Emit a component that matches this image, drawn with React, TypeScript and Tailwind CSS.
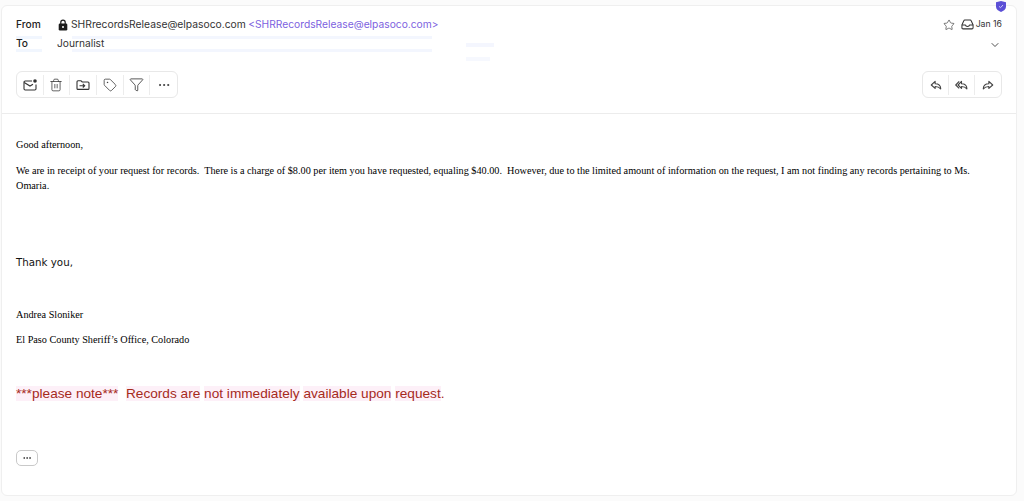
import React from 'react';
import { Trash2, Tag, Filter, MoreHorizontal, Star, ChevronDown } from 'lucide-react';

const MailUnread = () => (
  <svg width="14" height="14" viewBox="0 0 14 14" fill="none" stroke="currentColor" strokeWidth="1.1">
    <path d="M9 3H2.200C1.500 3 1 3.500 1 4.200v6.600c0 .7.5 1.200 1.200 1.200h9.600c.7 0 1.200-.5 1.200-1.200V6.500" />
    <path d="M1.200 4.500 7 8l3-1.800" />
    <circle cx="12" cy="3" r="1.800" fill="currentColor" stroke="none" />
  </svg>
);

const MoveTo = () => (
  <svg width="14" height="14" viewBox="0 0 14 14" fill="none" stroke="currentColor" strokeWidth="1.1">
    <path d="M1 3.800c0-.6.5-1 1-1h3l1.200 1.200H12c.6 0 1 .4 1 1v5.400c0 .6-.4 1-1 1H2c-.5 0-1-.4-1-1z" />
    <path d="M3.500 7.700h5M6.800 5.900l1.900 1.800-1.900 1.800" />
  </svg>
);

const Inbox = () => (
  <svg width="13" height="13" viewBox="0 0 14 14" fill="none" stroke="currentColor" strokeWidth="1.1">
    <path d="M1 7.500 3 3c.2-.5.6-.8 1.100-.8h5.800c.5 0 .9.3 1.100.8l2 4.500v3c0 .7-.5 1.200-1.200 1.200H2.200c-.7 0-1.200-.5-1.200-1.200z" />
    <path d="M1 7.500h3.600c.3 1 1.200 1.600 2.400 1.600s2.100-.6 2.400-1.600H13" />
  </svg>
);

const Shield = () => (
  <svg width="10" height="11" viewBox="0 0 10 11">
    <path d="M0 1.200 5 0l5 1.200v4.600C10 8.400 7.600 10 5 11 2.400 10 0 8.400 0 5.800z" fill="#5b4fd6" />
    <path d="M3 5.300 4.500 6.700 7 4" fill="none" stroke="#c9c4f5" strokeWidth="1" />
  </svg>
);

const LockIcon = () => (
  <svg width="10" height="12" viewBox="0 0 10 12" className="text-[#1c1c1c]">
    <path d="M2.800 5V3.300a2.200 2.200 0 0 1 4.400 0V5" fill="none" stroke="currentColor" strokeWidth="1.200" />
    <rect x="0.700" y="4.500" width="8.600" height="7" rx="1.300" fill="currentColor" />
    <circle cx="5" cy="8" r="1" fill="#fff" />
  </svg>
);

const ReplyIcon = () => (
  <svg width="12" height="12" viewBox="0 0 14 14" fill="none" stroke="#444" strokeWidth="1.300" strokeLinejoin="round">
    <path d="M6 2.800 1.500 7 6 11V8.700c2.600 0 4.600.6 6.500 2.800 0-3.800-2.500-6-6.500-6z" />
  </svg>
);

const ReplyAllIcon = () => (
  <svg width="13" height="12" viewBox="0 0 15 14" fill="none" stroke="#444" strokeWidth="1.300" strokeLinejoin="round">
    <path d="M7.500 2.800 3.500 7l4 4V8.700c2.400 0 4.500.6 6.300 2.800 0-3.800-2.300-6-6.300-6z" />
    <path d="M4.800 2.800.8 7l4 4" />
  </svg>
);

const ForwardIcon = () => (
  <svg width="12" height="12" viewBox="0 0 14 14" fill="none" stroke="#444" strokeWidth="1.300" strokeLinejoin="round">
    <path d="M8 2.800 12.500 7 8 11V8.700c-2.600 0-4.600.6-6.500 2.800 0-3.800 2.500-6 6.500-6z" />
  </svg>
);

const toolbarIcons = [
  <MailUnread />,
  <Trash2 size={14} strokeWidth={1.3} />,
  <MoveTo />,
  <Tag size={14} strokeWidth={1.3} />,
  <Filter size={15} strokeWidth={1.3} />,
  <MoreHorizontal size={14} strokeWidth={1.6} />,
];

const replyIcons = [<ReplyIcon />, <ReplyAllIcon />, <ForwardIcon />];

const noteWords = ['***please note***', 'Records are', 'not immediately', 'available upon', 'request'];

const ToolButton = ({ icon, last }: { icon: React.ReactNode; last: boolean }) => (
  <div className={`w-[26.67px] h-[20px] flex items-center justify-center text-[#333] ${last ? '' : 'border-r border-[#ececec]'}`}>
    {icon}
  </div>
);

export default function App() {
  return (
    <div className="w-[1024px] h-[501px] bg-[#fbfbfb] pt-[5px] pl-[1px] pr-[7px] pb-[5px] overflow-hidden">
      <div className="relative w-full h-full bg-white rounded-[6px] border border-[#efefef] font-['Inter',sans-serif]">
        <div className="absolute right-[10px] -top-[5px]">
          <Shield />
        </div>
        {/* faint smear left under the recipient row */}
        <div className="absolute left-[14px] top-[30px] w-[26px] h-[3px] bg-[#f1f6fe]" />
        <div className="absolute left-[70px] top-[30px] w-[360px] h-[3px] bg-[#f3f6fe]" />
        <div className="absolute left-[14px] top-[43px] w-[26px] h-[3px] bg-[#f1f6fe]" />
        <div className="absolute left-[70px] top-[43px] w-[360px] h-[3px] bg-[#f3f6fe]" />
        <div className="absolute left-[464px] top-[37px] w-[28px] h-[4px] bg-[#f4f6fe]" />
        <div className="absolute left-[464px] top-[51px] w-[24px] h-[4px] bg-[#f6f8fe]" />

        <div className="relative h-[108px] border-b border-[#ececec] pl-[14px] pr-[14px] pt-[11px]">
          <div className="flex items-center h-[16px]">
            <span className="w-[41px] text-[10.200px] font-medium text-[#222]">From</span>
            <span className="ml-[1px] mr-[3px] flex"><LockIcon /></span>
            <span className="text-[10.300px] text-[#333]">SHRrecordsRelease@elpasoco.com</span>
            <span className="text-[10.250px] text-[#7c5fe0] ml-[2.500px]">&lt;SHRRecordsRelease@elpasoco.com&gt;</span>
            <div className="ml-auto flex items-center text-[#333]">
              <Star size={12} strokeWidth={1.3} className="mr-[6px]" />
              <Inbox />
              <span className="text-[8.700px] ml-[2px]">Jan 16</span>
            </div>
          </div>
          <div className="flex items-center h-[16px] mt-[3px]">
            <span className="w-[41px] text-[10.200px] font-medium text-[#222]">To</span>
            <span className="text-[10.200px] text-[#333]">Journalist</span>
            <ChevronDown size={12} strokeWidth={1.6} className="ml-auto mr-[1px] text-[#222] mt-[2px]" />
          </div>

          <div className="flex justify-between mt-[19px]">
            <div className="flex items-center h-[27px] rounded-[6px] border border-[#e8e8e8]">
              {toolbarIcons.map((icon, i) => (
                <ToolButton key={i} icon={icon} last={i === toolbarIcons.length - 1} />
              ))}
            </div>
            <div className="flex items-center h-[27px] rounded-[6px] border border-[#e8e8e8] w-[80px] justify-between">
              {replyIcons.map((icon, i) => (
                <ToolButton key={i} icon={icon} last={i === replyIcons.length - 1} />
              ))}
            </div>
          </div>
        </div>

        <div className="pl-[14px] pr-[30px] pt-[24px]">
          <p className="font-['Liberation_Serif',serif] text-[10.230px] leading-[13px] text-black">Good afternoon,</p>
          <p className="font-['Liberation_Serif',serif] text-[10.230px] leading-[15px] text-black mt-[12px] whitespace-pre-wrap">
            {'We are in receipt of your request for records.  There is a charge of $8.00 per item you have requested, equaling $40.00.  However, due to the limited amount of information on the request, I am not finding any records pertaining to Ms. Omaria.'}
          </p>
          <p className="font-['DejaVu_Sans',sans-serif] text-[10.270px] leading-[14px] text-[#111] mt-[62px]">Thank you,</p>
          <p className="font-['Liberation_Serif',serif] text-[10.230px] leading-[13px] text-black mt-[39px]">Andrea Sloniker</p>
          <p className="font-['Liberation_Serif',serif] text-[10.230px] leading-[13px] text-black mt-[12px]">El Paso County Sheriff’s Office, Colorado</p>
          <p className="font-['Liberation_Sans',sans-serif] text-[13.650px] leading-[16px] text-[#a62a1c] mt-[40px] whitespace-pre-wrap">
            {noteWords.map((w, i) => (
              <span key={i}>
                <span className="bg-[#fdf0f8]">{w}</span>
                {i === 0 ? '  ' : i < noteWords.length - 1 ? ' ' : ''}
              </span>
            ))}.
          </p>
          <div className="mt-[48px] w-[22px] h-[16px] rounded-[5px] border border-[#c9c9c9] flex items-center justify-center text-[#333]">
            <MoreHorizontal size={10} strokeWidth={2} />
          </div>
        </div>
      </div>
    </div>
  );
}
